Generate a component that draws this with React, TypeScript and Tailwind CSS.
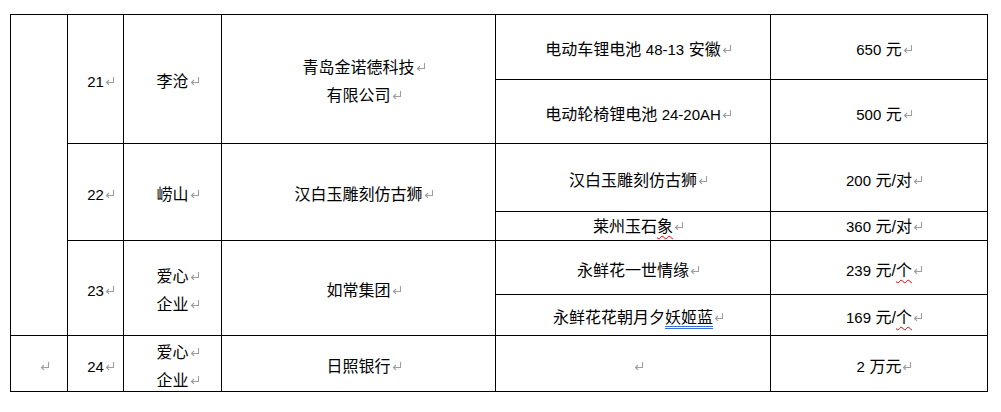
import React from "react";

// Word 段落标记
function Mark() {
  return (
    <svg
      viewBox="0 0 10 8"
      className="ml-[1px] -mr-[11px] inline-block h-[8px] w-[10px] align-[2px]"
      fill="none"
      stroke="#9e9e9e"
      strokeWidth="1.1"
    >
      <path d="M8.5 0V5.5H1.5" />
      <path d="M4 3L1.5 5.5L4 8" />
    </svg>
  );
}

function Line({ children }: { children?: React.ReactNode }) {
  return (
    <span className="whitespace-nowrap">
      {children}
      <Mark />
    </span>
  );
}

const num = "text-[15px]";
const wavy = "underline decoration-wavy decoration-red-600 decoration-1 underline-offset-[3px]";

function Cell({
  className = "",
  children,
}: {
  className?: string;
  children?: React.ReactNode;
}) {
  return (
    <div
      className={
        "flex flex-col items-center justify-center bg-white pt-[6px] leading-[28px] " +
        className
      }
    >
      {children}
    </div>
  );
}

export default function App() {
  return (
    <div
      className="min-h-[412px] bg-white pl-[10px] pt-[14px] text-[16px] text-black"
      style={{ fontFamily: '"Liberation Sans", "Noto Sans CJK SC", sans-serif' }}
    >
      <div className="grid w-[978px] grid-cols-[56px_55px_97px_273px_274px_216px] grid-rows-[64px_63px_67px_28px_53px_40px_55px] gap-px bg-black p-px">
        {/* 第一列：合并单元格 */}
        <Cell className="col-start-1 row-span-6 row-start-1" />
        <Cell className="col-start-1 row-start-7">
          <Line />
        </Cell>

        {/* 21 */}
        <Cell className="col-start-2 row-span-2 row-start-1">
          <Line>
            <span className={num}>21</span>
          </Line>
        </Cell>
        <Cell className="col-start-3 row-span-2 row-start-1">
          <Line>李沧</Line>
        </Cell>
        <Cell className="col-start-4 row-span-2 row-start-1">
          <Line>青岛金诺德科技</Line>
          <Line>有限公司</Line>
        </Cell>
        <Cell className="col-start-5 row-start-1">
          <Line>
            电动车锂电池 <span className={num}>48-13</span> 安徽
          </Line>
        </Cell>
        <Cell className="col-start-6 row-start-1">
          <Line>
            <span className={num}>650</span> 元
          </Line>
        </Cell>
        <Cell className="col-start-5 row-start-2">
          <Line>
            电动轮椅锂电池 <span className={num}>24-20AH</span>
          </Line>
        </Cell>
        <Cell className="col-start-6 row-start-2">
          <Line>
            <span className={num}>500</span> 元
          </Line>
        </Cell>

        {/* 22 */}
        <Cell className="col-start-2 row-span-2 row-start-3">
          <Line>
            <span className={num}>22</span>
          </Line>
        </Cell>
        <Cell className="col-start-3 row-span-2 row-start-3">
          <Line>崂山</Line>
        </Cell>
        <Cell className="col-start-4 row-span-2 row-start-3">
          <Line>汉白玉雕刻仿古狮</Line>
        </Cell>
        <Cell className="col-start-5 row-start-3">
          <Line>汉白玉雕刻仿古狮</Line>
        </Cell>
        <Cell className="col-start-6 row-start-3">
          <Line>
            <span className={num}>200</span> 元/对
          </Line>
        </Cell>
        <Cell className="col-start-5 row-start-4 !pt-[2px]">
          <Line>
            莱州玉石<span className={wavy}>象</span>
          </Line>
        </Cell>
        <Cell className="col-start-6 row-start-4 !pt-[2px]">
          <Line>
            <span className={num}>360</span> 元/对
          </Line>
        </Cell>

        {/* 23 */}
        <Cell className="col-start-2 row-span-2 row-start-5">
          <Line>
            <span className={num}>23</span>
          </Line>
        </Cell>
        <Cell className="col-start-3 row-span-2 row-start-5">
          <Line>爱心</Line>
          <Line>企业</Line>
        </Cell>
        <Cell className="col-start-4 row-span-2 row-start-5">
          <Line>如常集团</Line>
        </Cell>
        <Cell className="col-start-5 row-start-5">
          <Line>永鲜花一世情缘</Line>
        </Cell>
        <Cell className="col-start-6 row-start-5">
          <Line>
            <span className={num}>239</span> 元/<span className={wavy}>个</span>
          </Line>
        </Cell>
        <Cell className="col-start-5 row-start-6">
          <Line>
            永鲜花花朝月夕
            <span className="underline decoration-double decoration-[#3a6fd8] decoration-1 underline-offset-[3px]">
              妖姬蓝
            </span>
          </Line>
        </Cell>
        <Cell className="col-start-6 row-start-6">
          <Line>
            <span className={num}>169</span> 元/<span className={wavy}>个</span>
          </Line>
        </Cell>

        {/* 24 */}
        <Cell className="col-start-2 row-start-7">
          <Line>
            <span className={num}>24</span>
          </Line>
        </Cell>
        <Cell className="col-start-3 row-start-7 leading-[27px]">
          <Line>爱心</Line>
          <Line>企业</Line>
        </Cell>
        <Cell className="col-start-4 row-start-7">
          <Line>日照银行</Line>
        </Cell>
        <Cell className="col-start-5 row-start-7">
          <Line />
        </Cell>
        <Cell className="col-start-6 row-start-7">
          <Line>
            <span className={num}>2</span> 万元
          </Line>
        </Cell>
      </div>
    </div>
  );
}
